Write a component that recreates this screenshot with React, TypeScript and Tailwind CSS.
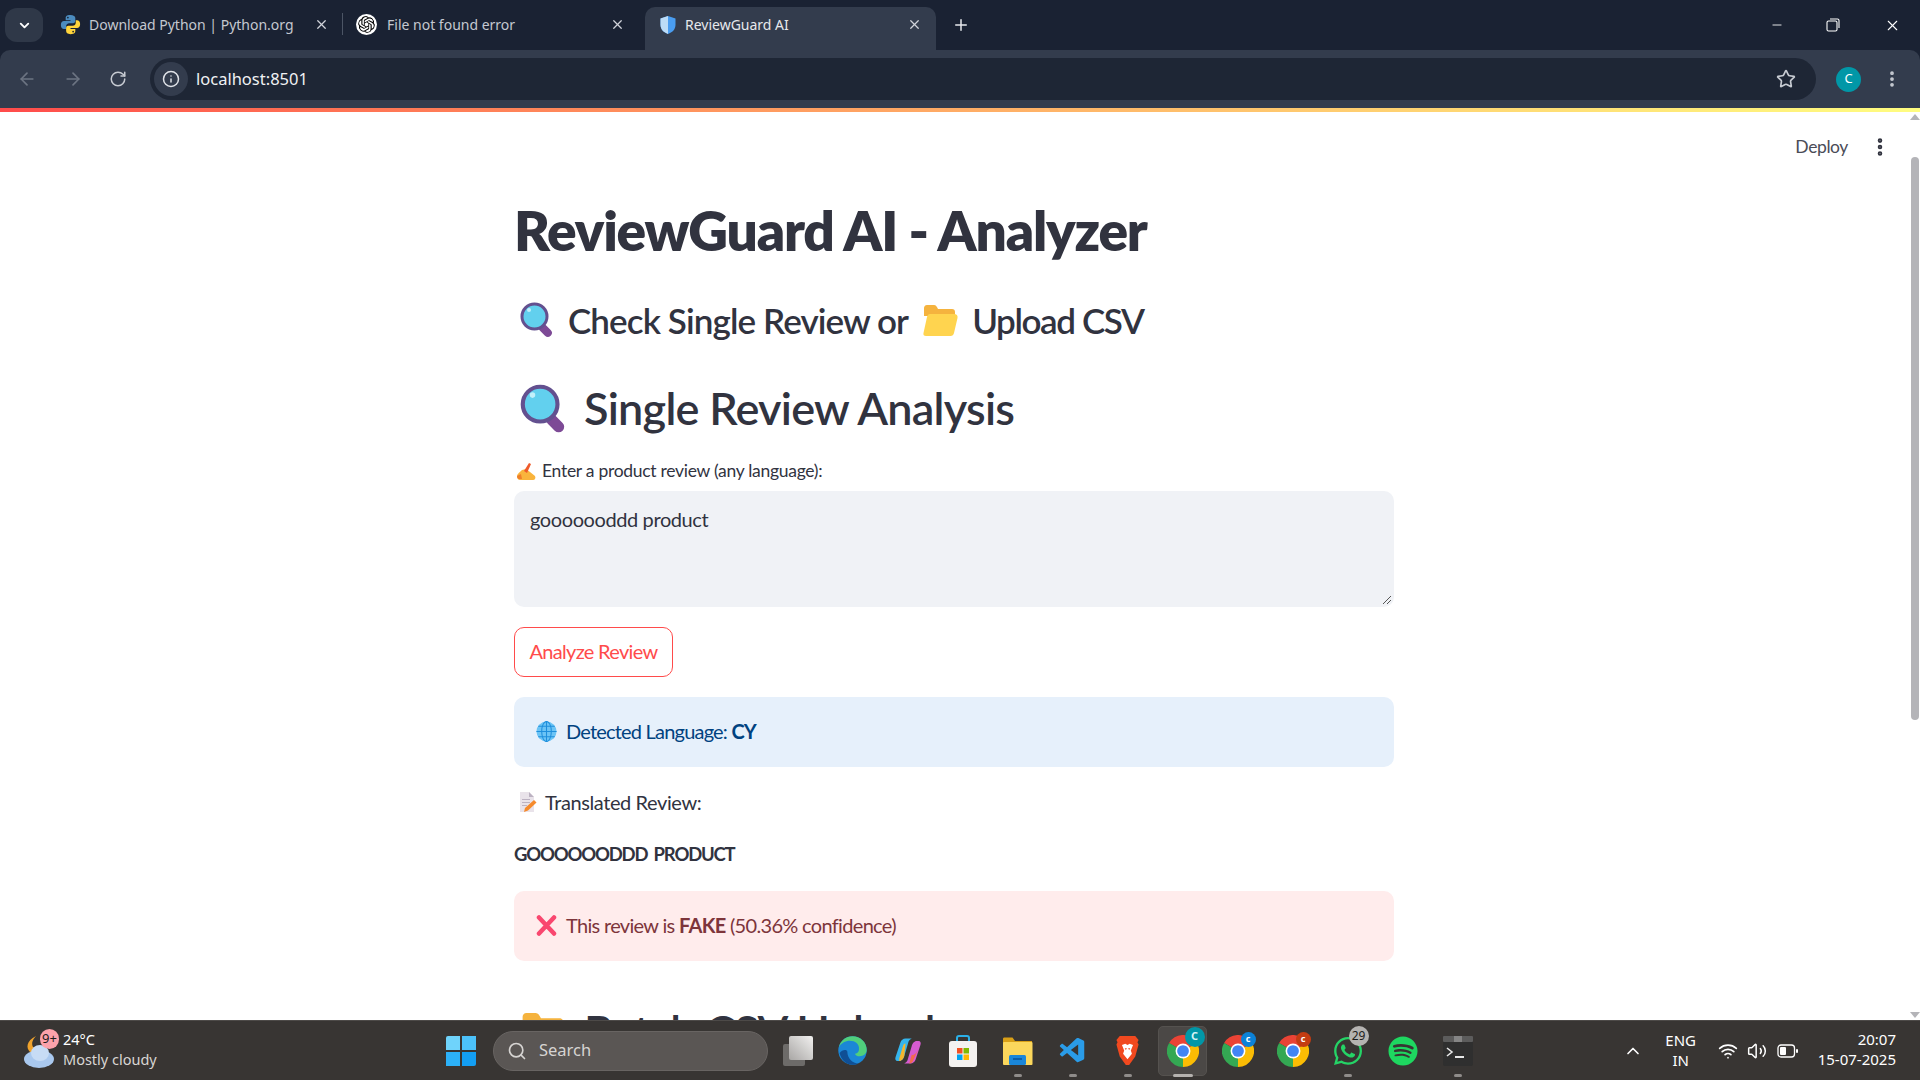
import {
  ArrowLeft,
  ArrowRight,
  ChevronDown,
  ChevronUp,
  Info,
  Minus,
  MoreVertical,
  Plus,
  RotateCw,
  Search,
  Star,
  Volume2,
  Wifi,
  X,
} from "lucide-react";
import { FaSpotify, FaWhatsapp } from "react-icons/fa";
import { SiOpenai } from "react-icons/si";
import { VscVscode } from "react-icons/vsc";

const PythonLogo = () => (
  <svg width="21" height="21" viewBox="0 0 24 24">
    <path fill="#4b8bbe" d="M12 1C7 1 6.5 3 6.5 4.5V7H12v1H4.5C2.5 8 1 9.500 1 12.500S2.500 17 4.500 17H7v-3c0-2 1.500-3.500 3.500-3.500h4.500c1.500 0 2.500-1 2.500-2.500V4.500C17.500 2.500 15.500 1 12 1Zm-3 2a1 1 0 1 1 0 2 1 1 0 0 1 0-2Z" />
    <path fill="#ffd43b" d="M12 23c5 0 5.500-2 5.500-3.500V17H12v-1h7.500c2 0 3.500-1.500 3.500-4.500S21.500 7 19.500 7H18v3c0 2-1.500 3.500-3.500 3.500H9.500C8 13.500 7 14.500 7 16v3.500C7 21.500 8.500 23 12 23Zm3-2a1 1 0 1 1 0-2 1 1 0 0 1 0 2Z" />
  </svg>
);

const ShieldLogo = () => (
  <svg width="18" height="20" viewBox="0 0 18 20">
    <path fill="#4a9df0" d="M9 1 16.500 3.500V10c0 4.500-3.500 7.500-7.500 9-4-1.500-7.500-4.500-7.500-9V3.500Z" />
    <path fill="#bcdcf7" d="M9 1v18c-4-1.500-7.500-4.500-7.500-9V3.500Z" />
  </svg>
);

const ChromeLogo = ({ size = 32 }: { size?: number }) => (
  <svg width={size} height={size} viewBox="0 0 24 24">
    <path fill="#ea4335" d="M12 12 1.600 6A12 12 0 0 1 22.400 6Z" />
    <path fill="#fbbc04" d="M12 12 22.400 6A12 12 0 0 1 12 24Z" />
    <path fill="#34a853" d="M12 12 12 24A12 12 0 0 1 1.600 6Z" />
    <circle cx="12" cy="12" r="5.600" fill="#fff" />
    <circle cx="12" cy="12" r="4.400" fill="#4285f4" />
  </svg>
);

const EdgeLogo = () => (
  <svg width="31" height="31" viewBox="0 0 24 24">
    <circle cx="12" cy="12" r="11" fill="#1b87d6" />
    <path fill="#50cf7c" d="M12 1c6 0 11 4.500 11 10.500 0 3-2.500 5-5.500 5-2 0-3.500-.8-3.500-2 2-.5 3-1.500 3-3.500C17.500 7 14 4.500 10 4.500 6.500 4.500 3 6.500 1.500 9.500 2.500 4.500 7 1 12 1Z" />
    <path fill="#0f4f95" d="M8 13c0 5 4 9 8.500 9.200C15 23 13.500 23 12 23 7 23 3 19 2 14c2-3 6-3 6-1Z" />
  </svg>
);

const CopilotLogo = () => (
  <svg width="30" height="30" viewBox="0 0 24 24">
    <path fill="#35b5ec" d="M10 2h5c-2 1-2.500 2-3 4l-3 10c-.5 2-2 4-4 4H3.500C2 20 1.500 18.500 2 17L6 5c.5-1.500 2-3 4-3Z" />
    <path fill="#f5b52e" d="M5 18 8 8c.5-1.500 1-2 2-2l-1 10c-.5 2-2 4-4 4Z" />
    <path fill="#d65bd0" d="M14 22H9c2-1 2.500-2 3-4l3-10c.5-2 2-4 4-4h1.500c1.500 0 2 1.500 1.500 3l-4 12c-.5 1.500-2 3-4 3Z" />
    <path fill="#f26b4e" d="M20 11 16 20c-.5 1-1.500 2-3 2l2-7c1 .5 3 0 5-4Z" />
  </svg>
);

const StoreLogo = () => (
  <svg width="30" height="34" viewBox="0 0 30 34">
    <path fill="none" stroke="#2bb0e8" strokeWidth="2" d="M9 9V4c0-1.500 1-2 2-2h8c1 0 2 .5 2 2v5" />
    <rect x="1" y="7" width="28" height="26" rx="3" fill="#f4f2f0" />
    <rect x="9" y="14" width="5.500" height="5.500" fill="#f25022" />
    <rect x="15.500" y="14" width="5.500" height="5.500" fill="#7fba00" />
    <rect x="9" y="20.500" width="5.500" height="5.500" fill="#00a4ef" />
    <rect x="15.500" y="20.500" width="5.500" height="5.500" fill="#ffb900" />
  </svg>
);

const FolderApp = () => (
  <svg width="31" height="28" viewBox="0 0 31 28">
    <path fill="#d9a017" d="M1 2c0-1 .5-1.500 1.500-1.500h8L13 4h17v6H1Z" />
    <rect x="1" y="5" width="29.500" height="23" rx="1" fill="#fbd75c" />
    <rect x="7" y="18" width="17" height="10" rx="1.500" fill="#1a86d8" />
    <rect x="11" y="21" width="9" height="2" fill="#0b5ea8" />
  </svg>
);

const BraveLogo = () => (
  <svg width="27" height="31" viewBox="0 0 24 28">
    <path fill="#f1491f" d="M5 1h14l3 3.500-1 2 1 2-3 11-5.500 7.500h-3L5 19.500l-3-11 1-2-1-2Z" />
    <path fill="#fff" d="M7 9l3-1 2 1 2-1 3 1-2 5 1 3-4 5-4-5 1-3Z" />
    <path fill="#f1491f" d="M9.500 12h2l-1 1.500ZM12.500 12h2l-1 1.500Z" />
  </svg>
);

const TerminalApp = () => (
  <svg width="30" height="30" viewBox="0 0 30 30">
    <rect width="30" height="30" rx="2" fill="#2f2f2f" />
    <rect width="30" height="6" rx="1" fill="#5c5c5c" />
    <rect x="11" width="8" height="6" fill="#858585" />
    <path fill="none" stroke="#e8e8e8" strokeWidth="1.600" d="M4 12l5 4-5 4" />
    <rect x="12" y="20" width="9" height="2" fill="#e8e8e8" />
  </svg>
);

const WindowsLogo = () => (
  <div className="grid grid-cols-2 gap-[2px] w-[30px] h-[30px]">
    <div className="bg-[#6fd3fb] rounded-tl-[2px]" />
    <div className="bg-[#4cc2fa]" />
    <div className="bg-[#2cb1f8]" />
    <div className="bg-[#139ef3] rounded-br-[2px]" />
  </div>
);

const WeatherIcon = () => (
  <svg width="32" height="36" viewBox="0 0 32 36">
    <path fill="#f0a32c" d="M12 3c-3 3-5 7-3 11s7 5 11 3c-3 5-10 6-14 2S2 8 12 3Z" />
    <ellipse cx="15" cy="26" rx="15" ry="9" fill="#a9c8ee" />
    <ellipse cx="16" cy="20" rx="9" ry="8" fill="#c7dcf5" />
  </svg>
);

const BatteryIcon = () => (
  <svg width="21" height="14" viewBox="0 0 21 14" fill="none">
    <rect x="1" y="1" width="16.500" height="12" rx="3" stroke="#fff" strokeWidth="1.300" />
    <rect x="3" y="3" width="6" height="8" rx="1" fill="#fff" />
    <rect x="19" y="5" width="2" height="4" rx="1" fill="#fff" />
  </svg>
);

// emoji the reference shows as colour glyphs, drawn since none is installed
const Magnifier = ({ size }: { size: number }) => (
  <svg width={size} height={size} viewBox="0 0 36 36">
    <rect x="21" y="21" width="8" height="15" rx="4" transform="rotate(-45 25 28)" fill="#7d4a96" />
    <circle cx="14.500" cy="14.500" r="12.500" fill="#62d0ee" stroke="#63508f" strokeWidth="3" />
    <circle cx="9" cy="8" r="2" fill="#c2f0fa" />
  </svg>
);

const FolderEmoji = ({ size }: { size: number }) => (
  <svg width={size} height={size} viewBox="0 0 36 36">
    <path fill="#f5b33e" d="M2 6c0-1.500 1-3 3-3h7c2 0 3 2 4 4h14c2 0 3 1 3 3v4H2Z" />
    <path fill="#ffd44f" d="M8 12h24c2.500 0 4 1.500 3.500 4L32 31c-.5 2-1.500 3-3.500 3H4c-2 0-3-1-2.500-3L5 15c.5-2 1.500-3 3-3Z" />
  </svg>
);

const WritingHand = () => (
  <svg width="20" height="20" viewBox="0 0 20 20">
    <path fill="#f9b43c" d="M1 15c0-2 3-4 5-6l4-1 4 3 5 4c1 2 0 4-2 4H4c-2 0-3-2-3-4Z" />
    <path fill="#ef5a2a" d="M8 10 13 2l2 1-4 9Z" />
    <path fill="#ef7f2a" d="M1 15l4-2 1 5H3c-1.500 0-2-1.500-2-3Z" />
  </svg>
);

const Memo = () => (
  <svg width="18" height="22" viewBox="0 0 18 22">
    <path fill="#e9e3ea" d="M1 1h9l5 5v15H1Z" />
    <path fill="#bcb2c2" d="M10 1l5 5h-5ZM3 8h8v1H3Zm0 3h8v1H3Zm0 3h5v1H3Z" />
    <path fill="#f58a2c" d="M5 21l1-4 9-8 2.500 2.500-8.500 8Z" />
  </svg>
);

const GlobeEmoji = () => (
  <svg width="21" height="21" viewBox="0 0 24 24" fill="none">
    <circle cx="12" cy="12" r="11.500" fill="#6cc4f5" />
    <g stroke="#1f8fdc" strokeWidth="1.200">
      <ellipse cx="12" cy="12" rx="5.500" ry="11.500" />
      <path d="M12 .5v23M.5 12h23M2.500 6h19M2.500 18h19" />
    </g>
  </svg>
);

const CrossEmoji = () => (
  <svg width="21" height="21" viewBox="0 0 21 21">
    <path stroke="#f9476f" strokeWidth="4.500" strokeLinecap="round" d="M3 2.500 18 18.500M18 2.500 3 18.500" />
  </svg>
);

const Tab = ({ icon, title, className, textGap }: { icon: React.ReactNode; title: string; className: string; textGap: string }) => (
  <div className={`flex items-center pb-[8px] pl-[11px] h-[43px] rounded-t-[10px] text-[14px] ${className}`}>
    <div className="w-[24px] flex justify-center shrink-0">{icon}</div>
    <span className={`flex-1 truncate ${textGap}`}>{title}</span>
    <X size={15} strokeWidth={2} className="text-[#d0d3da]" />
  </div>
);

const BrowserChrome = () => (
  <header className="shrink-0 font-['Noto_Sans',sans-serif] bg-[#1a2233]">
    <div className="h-[50px] flex items-end pl-[5px]">
      <div className="w-[38px] h-[34px] mb-[8px] mr-[2px] rounded-[12px] bg-[#2f3848] flex items-center justify-center text-white">
        <ChevronDown size={15} strokeWidth={3} />
      </div>
      <div className="pl-[2px] flex items-end">
        <Tab icon={<PythonLogo />} title="Download Python | Python.org" textGap="ml-[7px]" className="w-[295px] pr-[13px] text-[#c4c8d0]" />
        <div className="w-px h-[22px] bg-[#4c5565] mb-[15px]" />
        <Tab
          icon={<SiOpenai size={21} className="bg-white rounded-full text-black p-[2px]" />}
          title="File not found error"
          textGap="ml-[9px]"
          className="w-[302px] pr-[20px] text-[#c4c8d0]"
        />
        <Tab icon={<ShieldLogo />} title="ReviewGuard AI" textGap="ml-[5px]" className="w-[291px] pr-[14px] bg-[#333c4d] text-[#e6e8ec]" />
      </div>
      <Plus size={18} strokeWidth={2} className="text-[#e8eaee] ml-[16px] mb-[16px]" />
      <div className="flex-1" />
      <div className="flex items-center h-[50px] mr-[19px] gap-[42px] text-white">
        <Minus size={14} strokeWidth={1.500} />
        <svg width="14" height="14" viewBox="0 0 14 14" fill="none" stroke="currentColor" strokeWidth="1.100">
          <rect x="1" y="3" width="10" height="10" rx="1.500" />
          <path d="M4 1h7.500c1 0 1.500.5 1.500 1.500V10" />
        </svg>
        <X size={17} strokeWidth={1.500} className="ml-[2px]" />
      </div>
    </div>
    <div className="h-[58px] bg-[#333c4d] rounded-t-[10px] flex items-center pl-[17px]">
      <ArrowLeft size={20} strokeWidth={2} className="text-[#6c7482]" />
      <ArrowRight size={20} strokeWidth={2} className="text-[#6c7482] ml-[26px]" />
      <RotateCw size={18} strokeWidth={2} className="text-[#c7cbd2] ml-[26px]" />
      <div className="ml-[23px] w-[1666px] h-[42px] rounded-full bg-[#1e2635] flex items-center pl-[4px]">
        <div className="w-[34px] h-[34px] rounded-full bg-[#333c4d] flex items-center justify-center">
          <Info size={18} strokeWidth={2} className="text-[#e0e3e8]" />
        </div>
        <span className="ml-[8px] text-[16.500px] text-[#f0f1f3]">localhost:8501</span>
        <div className="flex-1" />
        <Star size={20} strokeWidth={2} className="text-[#c7cbd2] mr-[20px]" />
      </div>
      <div className="ml-[20px] w-[25px] h-[25px] rounded-full bg-[#0197a7] text-white text-[13px] flex items-center justify-center">
        C
      </div>
      <MoreVertical size={20} strokeWidth={2.500} className="text-[#c7cbd2] ml-[21px]" />
    </div>
    <div className="h-[4px] bg-gradient-to-r from-[#ff4b4b] to-[#fffd80]" />
  </header>
);

const Scrollbar = () => (
  <div className="w-[11px] shrink-0 flex flex-col items-center">
    <div className="mt-[2px] w-0 h-0 border-x-[5px] border-x-transparent border-b-[6px] border-b-[#b4b4b8]" />
    <div className="mt-[37px] w-[8px] h-[563px] rounded-full bg-[#b4b4b8]" />
    <div className="flex-1" />
    <div className="mb-[2px] w-0 h-0 border-x-[5px] border-x-transparent border-t-[6px] border-t-[#b4b4b8]" />
  </div>
);

const Content = () => (
  <main className="flex-1 min-w-0 overflow-hidden font-['Lato',sans-serif] text-[#31333f]">
    <div className="h-[70px] flex items-center justify-end text-[17.500px] tracking-[-0.4px] text-[#4a4c57]">
      <span>Deploy</span>
      <MoreVertical size={22} strokeWidth={3} className="text-[#31333f] ml-[21px] mr-[18px]" />
    </div>
    <div className="w-[880px] ml-[514px]">
      <h1 className="mt-[14px] h-[70px] leading-[68px] text-[55px] font-extrabold tracking-[-1.200px]">ReviewGuard AI - Analyzer</h1>
      <h3 className="mt-[30px] h-[50px] pb-[2px] flex items-center text-[35px] font-semibold tracking-[-0.9px]">
        <span className="ml-[6px] mr-[12px]"><Magnifier size={36} /></span>
        Check Single Review or
        <span className="ml-[14px] mr-[14px]"><FolderEmoji size={36} /></span>
        <span className="tracking-[-1.400px]">Upload CSV</span>
      </h3>
      <h2 className="mt-[33px] h-[60px] flex items-center text-[45px] font-semibold tracking-[-0.75px]">
        <span className="ml-[6px] mr-[14px]"><Magnifier size={50} /></span>
        Single Review Analysis
      </h2>
      <label className="mt-[19px] h-[26px] flex items-center text-[17.500px] tracking-[-0.28px]">
        <span className="ml-[2px] mr-[6px]"><WritingHand /></span>
        Enter a product review (any language):
      </label>
      <div className="relative mt-[7px] h-[116px] rounded-[10px] bg-[#f0f2f6] pl-[16px] pt-[14px] text-[20px] leading-[28px] tracking-[-0.4px]">
        gooooooddd product
        <svg className="absolute right-[2px] bottom-[2px]" width="10" height="10" viewBox="0 0 10 10" stroke="#555" strokeWidth="1">
          <path d="M1 9 9 1M5 9 9 5" />
        </svg>
      </div>
      <button className="block mt-[20px] w-[159px] h-[50px] pb-[2px] rounded-[10px] border border-[#ff4b4b] text-[#ff4b4b] text-[20px] tracking-[-0.7px] bg-white">
        Analyze Review
      </button>
      <div className="mt-[20px] h-[70px] pb-[2px] rounded-[10px] bg-[#e6f0fb] text-[#004280] text-[20px] tracking-[-0.8px] flex items-center pl-[22px]">
        <GlobeEmoji />
        <span className="ml-[9px]">Detected Language: <strong>CY</strong></span>
      </div>
      <p className="mt-[21px] h-[28px] pb-[1px] flex items-center text-[20px] tracking-[-0.4px]">
        <span className="ml-[5px] mr-[8px]"><Memo /></span>
        Translated Review:
      </p>
      <p className="mt-[24px] h-[28px] leading-[28px] text-[18.500px] font-bold tracking-[-1.200px] [word-spacing:3px]">GOOOOOODDD PRODUCT</p>
      <div className="mt-[23px] h-[70px] pb-[2px] rounded-[10px] bg-[#ffecec] text-[#7d353b] text-[20px] tracking-[-0.68px] flex items-center pl-[22px]">
        <CrossEmoji />
        <span className="ml-[9px]">This review is <strong>FAKE</strong> (50.36% confidence)</span>
      </div>
      <h2 className="mt-[41px] h-[60px] flex items-center text-[45px] font-semibold tracking-[-0.75px]">
        <span className="ml-[6px] mr-[17px]"><FolderEmoji size={47} /></span>
        Batch CSV Upload
      </h2>
    </div>
  </main>
);

const TaskIcon = ({ children, active, dot }: { children: React.ReactNode; active?: boolean; dot?: boolean }) => (
  <div className="relative w-[55px] h-[60px] flex items-center justify-center">
    {active && <div className="absolute left-[3px] top-[5px] w-[49px] h-[50px] rounded-[5px] bg-[#4b4846] border border-[#55524f]" />}
    <div className="relative flex items-center justify-center">{children}</div>
    {dot && (
      <div className={`absolute bottom-[4px] h-[3px] rounded-full ${active ? "w-[20px] bg-[#b5b2af]" : "w-[8px] bg-[#8f8c8a]"}`} />
    )}
  </div>
);

const Badge = ({ className, children }: { className: string; children: React.ReactNode }) => (
  <span className={`absolute flex items-center justify-center rounded-full ${className}`}>{children}</span>
);

const Taskbar = () => (
  <footer className="h-[60px] shrink-0 bg-[#383533] border-t border-[#4d4a48] flex items-center font-['Noto_Sans',sans-serif] text-white">
    <div className="w-[446px] flex items-center pl-[24px]">
      <div className="relative">
        <WeatherIcon />
        <Badge className="left-[16px] -top-[4px] w-[19px] h-[20px] bg-[#fca2ab] text-[#1c1c1c] text-[13px]">9+</Badge>
      </div>
      <div className="ml-[7px] pb-[3px] text-[14.500px] leading-[20px]">
        <div>24°C</div>
        <div className="text-[#d8d6d4]">Mostly cloudy</div>
      </div>
    </div>
    <WindowsLogo />
    <div className="ml-[17px] w-[275px] h-[40px] rounded-full bg-[#5a5654] border border-[#686462] flex items-center pl-[13px] text-[#d6d4d2]">
      <Search size={20} strokeWidth={2} />
      <span className="ml-[12px] pb-[1px] text-[16.500px]">Search</span>
    </div>
    <div className="flex items-center ml-[2px]">
      <TaskIcon>
        <div className="relative w-[30px] h-[30px]">
          <div className="absolute left-0 top-[8px] w-[22px] h-[22px] bg-[#6d6b69] rounded-[2px]" />
          <div className="absolute left-[6px] top-0 w-[24px] h-[24px] bg-gradient-to-bl from-[#f2f1f0] to-[#a9a7a5] rounded-[2px]" />
        </div>
      </TaskIcon>
      <TaskIcon><EdgeLogo /></TaskIcon>
      <TaskIcon><CopilotLogo /></TaskIcon>
      <TaskIcon><StoreLogo /></TaskIcon>
      <TaskIcon dot><FolderApp /></TaskIcon>
      <TaskIcon dot><VscVscode size={30} className="text-[#2a9ce8]" /></TaskIcon>
      <TaskIcon dot><BraveLogo /></TaskIcon>
      <TaskIcon active dot>
        <ChromeLogo />
        <Badge className="-right-[6px] -top-[8px] w-[20px] h-[20px] bg-[#0197a7] text-[#d8f3f5] text-[11px] font-bold">C</Badge>
      </TaskIcon>
      <TaskIcon>
        <ChromeLogo />
        <Badge className="-right-[2px] -top-[3px] w-[15px] h-[15px] bg-[#0b82d8] text-white text-[9px] font-bold">c</Badge>
      </TaskIcon>
      <TaskIcon>
        <ChromeLogo />
        <Badge className="-right-[2px] -top-[3px] w-[15px] h-[15px] bg-[#c43c12] text-white text-[9px] font-bold">c</Badge>
      </TaskIcon>
      <TaskIcon dot>
        <FaWhatsapp size={32} className="text-[#25d366]" />
        <Badge className="-right-[5px] -top-[9px] w-[20px] h-[20px] bg-[#b5b3b1] text-[#1c1c1c] text-[12px]">29</Badge>
      </TaskIcon>
      <TaskIcon><FaSpotify size={30} className="text-[#1ed760]" /></TaskIcon>
      <TaskIcon dot><TerminalApp /></TaskIcon>
    </div>
    <div className="flex-1" />
    <ChevronUp size={20} strokeWidth={2} />
    <div className="ml-[18px] w-[40px] pb-[2px] text-center text-[15px] leading-[20px]">
      <div>ENG</div>
      <div>IN</div>
    </div>
    <Wifi size={20} strokeWidth={2} className="ml-[17px]" />
    <Volume2 size={20} strokeWidth={1.800} className="ml-[9px]" />
    <div className="ml-[10px]"><BatteryIcon /></div>
    <div className="ml-[20px] mr-[24px] pb-[3px] text-right text-[15px] leading-[20px]">
      <div>20:07</div>
      <div>15-07-2025</div>
    </div>
  </footer>
);

export default function App() {
  return (
    <div className="h-screen flex flex-col overflow-hidden bg-white">
      <BrowserChrome />
      <div className="flex-1 min-h-0 flex">
        <Content />
        <Scrollbar />
      </div>
      <Taskbar />
    </div>
  );
}
